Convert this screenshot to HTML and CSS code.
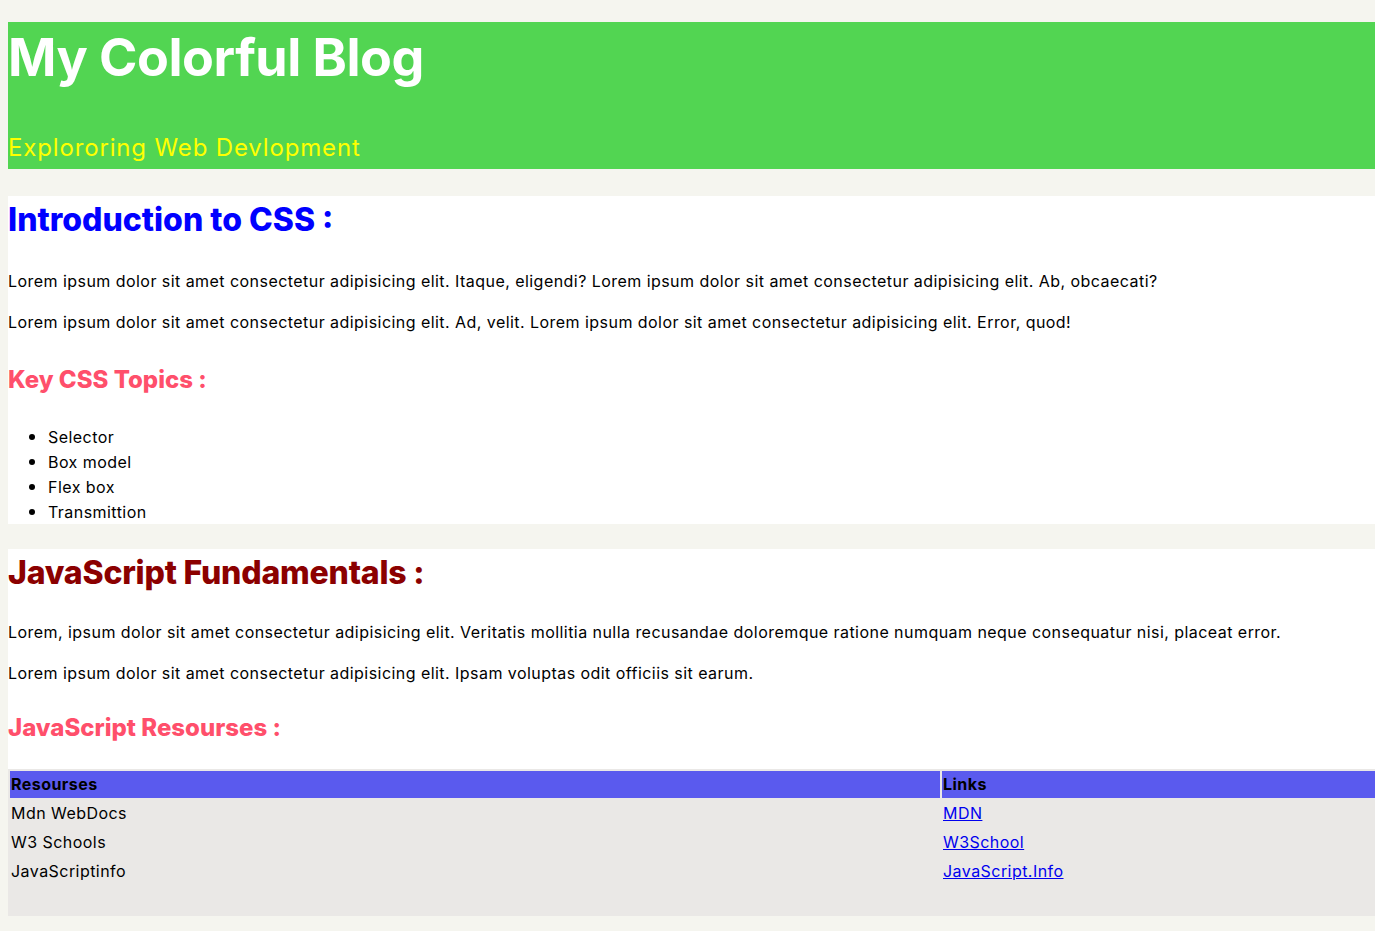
FILE: index.html
```html
<!DOCTYPE html>
<html lang="en">
<head>
<meta charset="UTF-8">
<title>My Colorful Blog</title>
<link rel="stylesheet" href="styles.css">
</head>
<body>
  <header class="site-header">
    <h1 class="site-title">My Colorful Blog</h1>
    <p class="site-tagline">Explororing Web Devlopment</p>
  </header>

  <section class="post post--css">
    <h2 class="post-title post-title--css">Introduction to CSS :</h2>
    <p class="post-text">Lorem ipsum dolor sit amet consectetur adipisicing elit. Itaque, eligendi? Lorem ipsum dolor sit amet consectetur adipisicing elit. Ab, obcaecati?</p>
    <p class="post-text">Lorem ipsum dolor sit amet consectetur adipisicing elit. Ad, velit. Lorem ipsum dolor sit amet consectetur adipisicing elit. Error, quod!</p>
    <h3 class="post-subtitle">Key CSS Topics :</h3>
    <ul class="topic-list">
      <li>Selector</li>
      <li>Box model</li>
      <li>Flex box</li>
      <li>Transmittion</li>
    </ul>
  </section>

  <section class="post post--js">
    <h2 class="post-title post-title--js">JavaScript Fundamentals :</h2>
    <p class="post-text">Lorem, ipsum dolor sit amet consectetur adipisicing elit. Veritatis mollitia nulla recusandae doloremque ratione numquam neque consequatur nisi, placeat error.</p>
    <p class="post-text">Lorem ipsum dolor sit amet consectetur adipisicing elit. Ipsam voluptas odit officiis sit earum.</p>
    <h3 class="post-subtitle">JavaScript Resourses :</h3>
    <table class="res-table">
      <thead class="res-head">
        <tr>
          <th class="res-col-name">Resourses</th>
          <th>Links</th>
        </tr>
      </thead>
      <tbody>
        <tr><td>Mdn WebDocs</td><td><a href="#">MDN</a></td></tr>
        <tr><td>W3 Schools</td><td><a href="#">W3School</a></td></tr>
        <tr><td>JavaScriptinfo</td><td><a href="#">JavaScript.Info</a></td></tr>
        <tr><td>&nbsp;</td><td>&nbsp;</td></tr>
      </tbody>
    </table>
  </section>
</body>
</html>
```

FILE: styles.css
```css
html {
  background: #f5f5ef;
}

body {
  margin: 0 0 0 8px;
  background: #f5f5ef;
  color: #000;
  font-family: Inter, "Open Sans", "DejaVu Sans", sans-serif;
  font-size: 16px;
  line-height: 25px;
  letter-spacing: 0.45px;
}

.site-header {
  margin-top: 22px;
  padding-bottom: 3px;
  background: #52d552;
}

.site-title {
  margin: 0;
  color: #fff;
  font-size: 52px;
  line-height: 72px;
  font-weight: 700;
  letter-spacing: -0.5px;
}

.site-tagline {
  margin: 36px 0 0;
  color: #ffff00;
  font-size: 24px;
  line-height: 36px;
  letter-spacing: 0.85px;
}

.post {
  margin-top: 27px;
  background: #fff;
  overflow: hidden;
}

.post + .post {
  margin-top: 25px;
}

.post-title {
  margin: 0 0 25px;
  font-size: 32px;
  line-height: 48px;
  font-weight: 800;
  letter-spacing: 0;
}

.post-title--css {
  color: #0000ff;
}

.post-title--js {
  color: #8b0000;
  margin-bottom: 23px;
  letter-spacing: -0.2px;
}

.post-text {
  margin: 0 0 16px;
}

.post-subtitle {
  margin: 27px 0 26px;
  color: #ff4f6b;
  font-size: 24px;
  line-height: 36px;
  font-weight: 800;
  letter-spacing: 0;
}

.post--js .post-subtitle {
  margin: 24px 0 23px;
}

.topic-list {
  margin: 0;
  padding-left: 40px;
}

.topic-list li {
  height: 25px;
}

.topic-list li::marker {
  font-family: "DejaVu Sans", sans-serif;
  font-size: 1.2em;
}

.res-table {
  width: calc(100% + 6px);
  border-spacing: 2px;
  background: #eae8e6;
}

.res-head {
  background: #fff;
}

.res-table th {
  background: #5a5aee;
  text-align: left;
  font-weight: 700;
  padding: 1px;
}

.res-table td {
  padding: 1px;
}

.res-col-name {
  width: 928px;
}

.res-table a {
  color: #0000ee;
}
```
